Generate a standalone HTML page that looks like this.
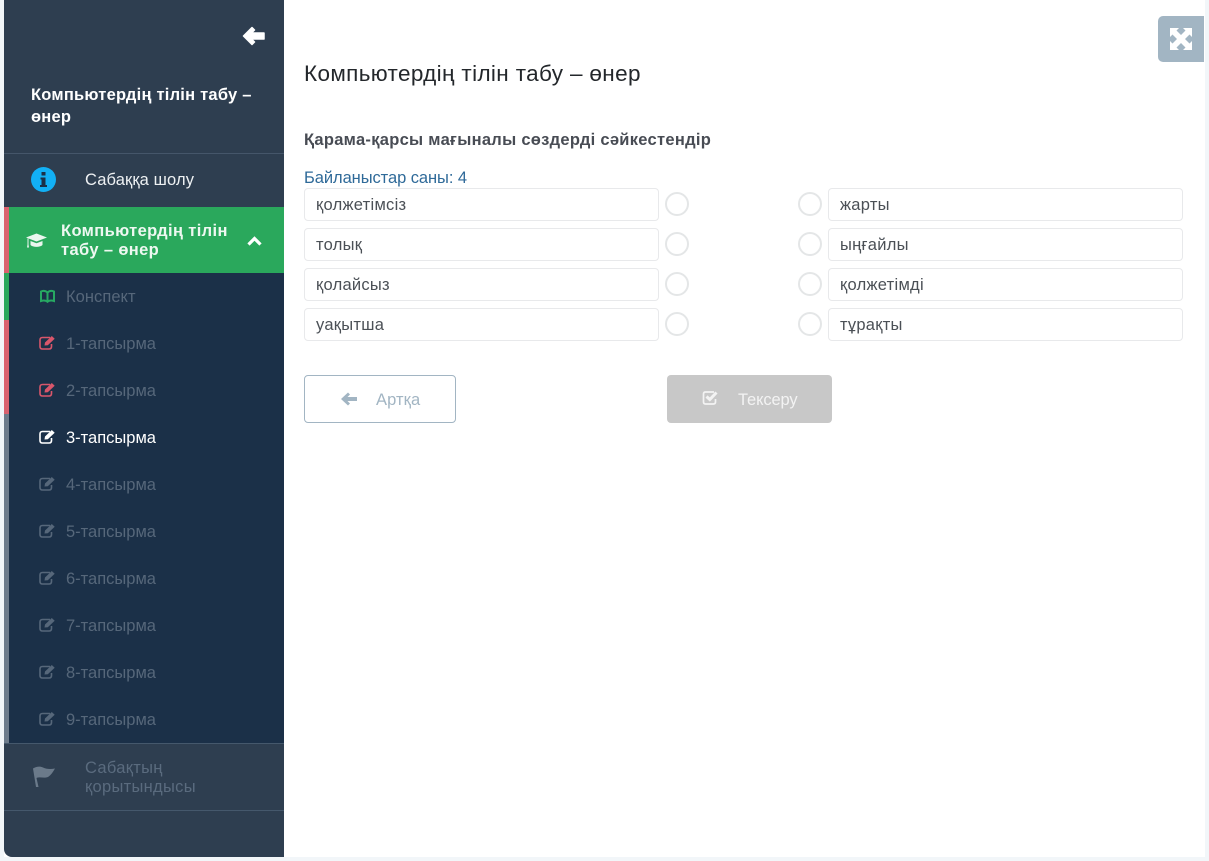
<!DOCTYPE html>
<html><head><meta charset="utf-8">
<style>
html,body{margin:0;padding:0;width:1209px;height:861px;overflow:hidden;background:#f2f6f9;font-family:"Liberation Sans","DejaVu Sans",sans-serif}
.a{position:absolute;white-space:nowrap}
#main{position:absolute;left:4px;top:0;width:1201px;height:857px;background:#fff}
#side{position:absolute;left:4px;top:0;width:280px;height:857px;background:#2e3e50;border-bottom-left-radius:8px;overflow:hidden}
.item{position:absolute;left:66px;font-size:16.5px;line-height:20px;color:#56677a;letter-spacing:0;white-space:nowrap}
.bar{position:absolute;left:4px;width:5px}
.box{position:absolute;width:353px;height:31px;border:1px solid #e8e9eb;border-radius:4px;background:#fff;font-size:16.5px;line-height:33px;color:#4b5056;box-sizing:content-box;text-indent:11px;letter-spacing:.27px}
.c{position:absolute;width:20px;height:20px;border:2px solid #e4e6e7;border-radius:50%;background:#fff}
svg{position:absolute;overflow:visible}
</style></head><body>
<div id="main"></div>
<div id="side"></div>
<div class="a" style="left:4px;top:153px;width:280px;height:1px;background:#45566a"></div>
<div class="a" style="left:4px;top:207px;width:280px;height:66px;background:#2aa85c"></div>
<div class="a" style="left:4px;top:273px;width:280px;height:470px;background:#1b3048"></div>
<div class="a" style="left:4px;top:743px;width:280px;height:1px;background:#45586c"></div>
<div class="a" style="left:4px;top:810px;width:280px;height:1px;background:#45586c"></div>
<div class="bar" style="top:207px;height:66px;background:#d9626f"></div>
<div class="bar" style="top:273px;height:47px;background:#2aa85c"></div>
<div class="bar" style="top:320px;height:94px;background:#d9626f"></div>
<div class="bar" style="top:414px;height:329px;background:#6d7c8c"></div>

<svg style="left:242px;top:26px" width="24" height="20" viewBox="0 0 24 20"><path d="M1.500 10L10 1.500L12.500 4L9.500 7H22V13H9.500L12.500 16L10 18.500Z" fill="#fff" stroke="#fff" stroke-width="1.500" stroke-linejoin="round"/></svg>

<div class="a" style="left:31px;top:84px;font-size:16.500px;line-height:22px;font-weight:700;color:#fff;letter-spacing:.23px">Компьютердің тілін табу –<br>өнер</div>

<svg style="left:31px;top:167px" width="25" height="25" viewBox="0 0 25 25"><circle cx="12.500" cy="12.500" r="12.500" fill="#12b0f5"/><rect x="10.500" y="5" width="4" height="3.500" fill="#1b3048"/><path d="M9.500 10.500H14.500V18H16V20H9V18H10.500V12.500H9.500Z" fill="#1b3048"/></svg>
<div class="a" style="left:85px;top:170px;font-size:16.500px;line-height:20px;color:#eef1f3;letter-spacing:.12px">Сабаққа шолу</div>

<svg style="left:26px;top:232px" width="22" height="17" viewBox="0 0 22 17"><path d="M0 5.500L10.500 1.500L21 5.500L10.500 9.500Z M4.500 9L10.500 11.300L16.500 9V13C14 15.500 7 15.500 4.500 13Z M1.500 6.500H2.500V12.500L3 15.500H1L1.500 12.500Z" fill="#eaf6ee"/></svg>
<div class="a" style="left:61px;top:222px;font-size:16.500px;line-height:19px;font-weight:700;color:#eef8f1;letter-spacing:.37px">Компьютердің тілін<br>табу – өнер</div>
<svg style="left:247px;top:236px" width="15" height="11" viewBox="0 0 15 11"><path d="M1.500 8.500L7.500 2.500L13.500 8.500" fill="none" stroke="#fff" stroke-width="3.200"/></svg>

<svg style="left:40px;top:290px" width="15" height="13" viewBox="0 0 15 13"><path d="M1 1.500C3.500 .5 6 1 7.500 2.500C9 1 11.500 .5 14 1.500V11C11.500 10.200 9 10.500 7.500 11.800C6 10.500 3.500 10.200 1 11Z M7.500 2.500V11.800" fill="none" stroke="#27a862" stroke-width="2"/></svg>
<div class="item" style="top:287px;letter-spacing:.05px">Конспект</div>

<svg style="left:39px;top:335px" width="17" height="15" viewBox="0 0 17 15"><path d="M11 2.500H3.500Q1 2.500 1 5V11.500Q1 14 3.500 14H10Q12.500 14 12.500 11.500V9" fill="none" stroke="#d9566b" stroke-width="1.600"/><path d="M5.500 10.500L6 7.500L12.800 1L15.700 3.800L8.800 10.200Z" fill="#d9566b"/></svg>
<div class="item" style="top:334px">1-тапсырма</div>
<svg style="left:39px;top:382px" width="17" height="15" viewBox="0 0 17 15"><path d="M11 2.500H3.500Q1 2.500 1 5V11.500Q1 14 3.500 14H10Q12.500 14 12.500 11.500V9" fill="none" stroke="#d9566b" stroke-width="1.600"/><path d="M5.500 10.500L6 7.500L12.800 1L15.700 3.800L8.800 10.200Z" fill="#d9566b"/></svg>
<div class="item" style="top:381px">2-тапсырма</div>
<svg style="left:39px;top:429px" width="17" height="15" viewBox="0 0 17 15"><path d="M11 2.500H3.500Q1 2.500 1 5V11.500Q1 14 3.500 14H10Q12.500 14 12.500 11.500V9" fill="none" stroke="#fff" stroke-width="1.600"/><path d="M5.500 10.500L6 7.500L12.800 1L15.700 3.800L8.800 10.200Z" fill="#fff"/></svg>
<div class="item" style="top:428px;color:#fff">3-тапсырма</div>
<svg style="left:39px;top:476px" width="17" height="15" viewBox="0 0 17 15"><path d="M11 2.500H3.500Q1 2.500 1 5V11.500Q1 14 3.500 14H10Q12.500 14 12.500 11.500V9" fill="none" stroke="#56677a" stroke-width="1.600"/><path d="M5.500 10.500L6 7.500L12.800 1L15.700 3.800L8.800 10.200Z" fill="#56677a"/></svg>
<div class="item" style="top:475px">4-тапсырма</div>
<svg style="left:39px;top:523px" width="17" height="15" viewBox="0 0 17 15"><path d="M11 2.500H3.500Q1 2.500 1 5V11.500Q1 14 3.500 14H10Q12.500 14 12.500 11.500V9" fill="none" stroke="#56677a" stroke-width="1.600"/><path d="M5.500 10.500L6 7.500L12.800 1L15.700 3.800L8.800 10.200Z" fill="#56677a"/></svg>
<div class="item" style="top:522px">5-тапсырма</div>
<svg style="left:39px;top:570px" width="17" height="15" viewBox="0 0 17 15"><path d="M11 2.500H3.500Q1 2.500 1 5V11.500Q1 14 3.500 14H10Q12.500 14 12.500 11.500V9" fill="none" stroke="#56677a" stroke-width="1.600"/><path d="M5.500 10.500L6 7.500L12.800 1L15.700 3.800L8.800 10.200Z" fill="#56677a"/></svg>
<div class="item" style="top:569px">6-тапсырма</div>
<svg style="left:39px;top:617px" width="17" height="15" viewBox="0 0 17 15"><path d="M11 2.500H3.500Q1 2.500 1 5V11.500Q1 14 3.500 14H10Q12.500 14 12.500 11.500V9" fill="none" stroke="#56677a" stroke-width="1.600"/><path d="M5.500 10.500L6 7.500L12.800 1L15.700 3.800L8.800 10.200Z" fill="#56677a"/></svg>
<div class="item" style="top:616px">7-тапсырма</div>
<svg style="left:39px;top:664px" width="17" height="15" viewBox="0 0 17 15"><path d="M11 2.500H3.500Q1 2.500 1 5V11.500Q1 14 3.500 14H10Q12.500 14 12.500 11.500V9" fill="none" stroke="#56677a" stroke-width="1.600"/><path d="M5.500 10.500L6 7.500L12.800 1L15.700 3.800L8.800 10.200Z" fill="#56677a"/></svg>
<div class="item" style="top:663px">8-тапсырма</div>
<svg style="left:39px;top:711px" width="17" height="15" viewBox="0 0 17 15"><path d="M11 2.500H3.500Q1 2.500 1 5V11.500Q1 14 3.500 14H10Q12.500 14 12.500 11.500V9" fill="none" stroke="#56677a" stroke-width="1.600"/><path d="M5.500 10.500L6 7.500L12.800 1L15.700 3.800L8.800 10.200Z" fill="#56677a"/></svg>
<div class="item" style="top:710px">9-тапсырма</div>

<svg style="left:33px;top:766px" width="23" height="22" viewBox="0 0 23 22"><path d="M0 2.500C3 .5 7 0 10 1.500C13 3 17 3.500 22 2.500C20 6 18 9 15 11C11 12.500 7 10.500 3.500 12L5.500 21H3Z" fill="#6b7a8a"/></svg>
<div class="a" style="left:85px;top:759px;font-size:16.500px;line-height:19px;color:#5a6b7e;letter-spacing:.3px">Сабақтың<br>қорытындысы</div>

<div class="a" style="left:1158px;top:16px;width:46px;height:46px;background:#a2b5c3;border-radius:5px 0 0 5px"></div>
<svg style="left:1170px;top:28px" width="22" height="22" viewBox="0 0 22 22"><path d="M0 0H9L6.500 2.500L11 7L15.500 2.500L13 0H22V9L19.500 6.500L15 11L19.500 15.500L22 13V22H13L15.500 19.500L11 15L6.500 19.500L9 22H0V13L2.500 15.500L7 11L2.500 6.500L0 9Z" fill="#fff"/></svg>

<div class="a" style="left:304px;top:60px;font-size:22.500px;line-height:28px;color:#23272b;letter-spacing:.36px">Компьютердің тілін табу – өнер</div>
<div class="a" style="left:304px;top:130px;font-size:16.500px;line-height:20px;font-weight:700;color:#484c54;letter-spacing:.29px">Қарама-қарсы мағыналы сөздерді сәйкестендір</div>
<div class="a" style="left:304px;top:168px;font-size:16.500px;line-height:20px;color:#2f6a99;letter-spacing:-.07px">Байланыстар саны: 4</div>

<div class="box" style="left:304px;top:188px">қолжетімсіз</div>
<div class="box" style="left:304px;top:228px">толық</div>
<div class="box" style="left:304px;top:268px">қолайсыз</div>
<div class="box" style="left:304px;top:308px">уақытша</div>
<div class="c" style="left:665px;top:192px"></div>
<div class="c" style="left:665px;top:232px"></div>
<div class="c" style="left:665px;top:272px"></div>
<div class="c" style="left:665px;top:312px"></div>
<div class="c" style="left:798px;top:192px"></div>
<div class="c" style="left:798px;top:232px"></div>
<div class="c" style="left:798px;top:272px"></div>
<div class="c" style="left:798px;top:312px"></div>
<div class="box" style="left:828px;top:188px">жарты</div>
<div class="box" style="left:828px;top:228px">ыңғайлы</div>
<div class="box" style="left:828px;top:268px">қолжетімді</div>
<div class="box" style="left:828px;top:308px">тұрақты</div>

<div class="a" style="left:304px;top:375px;width:150px;height:46px;border:1px solid #a2b5c3;border-radius:4px;background:#fff"></div>
<svg style="left:340px;top:391px" width="18" height="16" viewBox="0 0 18 16"><path d="M1 8L8 1.500L10 3.500L7.500 6H17V10H7.500L10 12.500L8 14.500Z" fill="#a2b5c3"/></svg>
<div class="a" style="left:376px;top:390px;font-size:16.500px;line-height:20px;color:#a2b5c3;letter-spacing:.1px">Артқа</div>

<div class="a" style="left:667px;top:375px;width:165px;height:48px;background:#c8c8c8;border-radius:4px"></div>
<svg style="left:702px;top:390px" width="18" height="16" viewBox="0 0 18 16"><path d="M12 2H3.500Q1.500 2 1.500 4V12Q1.500 14 3.500 14H11.500Q13.500 14 13.500 12V9" fill="none" stroke="#f3f3f3" stroke-width="1.700"/><path d="M4.500 6.500L7.800 9.500L14.500 2.500" fill="none" stroke="#f3f3f3" stroke-width="3"/></svg>
<div class="a" style="left:738px;top:390px;font-size:16.500px;line-height:20px;color:#f3f3f3;letter-spacing:-.12px">Тексеру</div>
</body></html>
